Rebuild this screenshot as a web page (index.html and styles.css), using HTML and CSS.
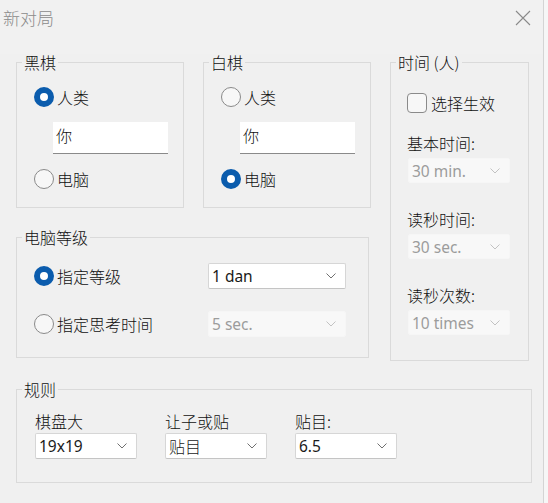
FILE: index.html
```html
<!DOCTYPE html>
<html lang="zh-CN">
<head>
<meta charset="utf-8">
<title>新对局</title>
<link rel="stylesheet" href="styles.css">
</head>
<body>
<div class="window">
  <header class="titlebar">
    <span class="title">新对局</span>
    <svg class="close" width="16" height="16" viewBox="0 0 16 16" aria-label="关闭"><path d="M1 1L15 15M15 1L1 15" stroke="#8a8a8a" stroke-width="1.1" fill="none"/></svg>
  </header>
  <main class="content">
    <div class="top">
      <div class="leftcol">
        <div class="players">
          <fieldset class="group player">
            <legend>黑棋</legend>
            <label class="opt"><input type="radio" name="black" checked><span>人类</span></label>
            <input class="name" type="text" value="你">
            <label class="opt"><input type="radio" name="black"><span>电脑</span></label>
          </fieldset>
          <fieldset class="group player">
            <legend>白棋</legend>
            <label class="opt"><input type="radio" name="white"><span>人类</span></label>
            <input class="name" type="text" value="你">
            <label class="opt"><input type="radio" name="white" checked><span>电脑</span></label>
          </fieldset>
        </div>
        <fieldset class="group level">
          <legend>电脑等级</legend>
          <div class="lrow">
            <label class="opt lopt"><input type="radio" name="lv" checked><span>指定等级</span></label>
            <div class="combo lcombo"><span>1 dan</span><svg class="chev" width="10" height="6" viewBox="0 0 10 6"><path d="M0.5 0.5L5 5L9.5 0.5" fill="none" stroke="currentColor" stroke-width="1"/></svg></div>
          </div>
          <div class="lrow second">
            <label class="opt lopt"><input type="radio" name="lv"><span>指定思考时间</span></label>
            <div class="combo lcombo disabled"><span>5 sec.</span><svg class="chev" width="10" height="6" viewBox="0 0 10 6"><path d="M0.5 0.5L5 5L9.5 0.5" fill="none" stroke="currentColor" stroke-width="1"/></svg></div>
          </div>
        </fieldset>
      </div>
      <fieldset class="group time">
        <legend>时间 (人)</legend>
        <label class="opt"><input type="checkbox"><span>选择生效</span></label>
        <div class="tlabel first">基本时间:</div>
        <div class="combo tcombo disabled"><span>30 min.</span><svg class="chev" width="10" height="6" viewBox="0 0 10 6"><path d="M0.5 0.5L5 5L9.5 0.5" fill="none" stroke="currentColor" stroke-width="1"/></svg></div>
        <div class="tlabel">读秒时间:</div>
        <div class="combo tcombo disabled"><span>30 sec.</span><svg class="chev" width="10" height="6" viewBox="0 0 10 6"><path d="M0.5 0.5L5 5L9.5 0.5" fill="none" stroke="currentColor" stroke-width="1"/></svg></div>
        <div class="tlabel">读秒次数:</div>
        <div class="combo tcombo disabled"><span>10 times</span><svg class="chev" width="10" height="6" viewBox="0 0 10 6"><path d="M0.5 0.5L5 5L9.5 0.5" fill="none" stroke="currentColor" stroke-width="1"/></svg></div>
      </fieldset>
    </div>
    <fieldset class="group rules">
      <legend>规则</legend>
      <div class="rcols">
        <div class="rcol">
          <div class="rlabel">棋盘大</div>
          <div class="combo rcombo"><span>19x19</span><svg class="chev" width="10" height="6" viewBox="0 0 10 6"><path d="M0.5 0.5L5 5L9.5 0.5" fill="none" stroke="currentColor" stroke-width="1"/></svg></div>
        </div>
        <div class="rcol">
          <div class="rlabel">让子或贴</div>
          <div class="combo rcombo"><span class="cjk">贴目</span><svg class="chev" width="10" height="6" viewBox="0 0 10 6"><path d="M0.5 0.5L5 5L9.5 0.5" fill="none" stroke="currentColor" stroke-width="1"/></svg></div>
        </div>
        <div class="rcol">
          <div class="rlabel">贴目:</div>
          <div class="combo rcombo"><span>6.5</span><svg class="chev" width="10" height="6" viewBox="0 0 10 6"><path d="M0.5 0.5L5 5L9.5 0.5" fill="none" stroke="currentColor" stroke-width="1"/></svg></div>
        </div>
      </div>
    </fieldset>
  </main>
</div>
</body>
</html>
```

FILE: styles.css
```css
html {
  background: #f6f6f6;
}
body {
  margin: 0;
  width: 548px;
  height: 503px;
  overflow: hidden;
  font-family: "Noto Sans CJK SC", "Noto Sans", sans-serif;
  font-size: 16px;
  font-weight: 300;
  color: #111;
}
.window {
  box-sizing: border-box;
  width: 544px;
  height: 503px;
  background: #f0f0f0;
  border-right: 1px solid #d4d4d4;
}
.titlebar {
  box-sizing: border-box;
  height: 54px;
  display: flex;
  justify-content: space-between;
  align-items: flex-start;
  padding: 9px 12px 0 3px;
  background: #f1f1f1;
}
.title {
  font-size: 17px;
  line-height: 17px;
  color: #8b8b8b;
}
.close {
  display: block;
  margin-top: 1px;
}
.content {
  padding-left: 16px;
}
.top {
  display: flex;
  align-items: flex-start;
}
.leftcol {
  display: flex;
  flex-direction: column;
  width: 355px;
}
.players {
  display: flex;
  gap: 19px;
}
.group {
  --pl: 17px;
  box-sizing: border-box;
  margin: 0;
  border: 1px solid #dadada;
  min-width: 0;
  padding-left: var(--pl);
}
.group legend {
  padding: 0 2px;
  margin-left: calc(5px - var(--pl));
  font-size: 16px;
  line-height: 16px;
  color: #111;
}
.player {
  width: 168px;
  padding-top: 17px;
  padding-bottom: 18px;
  padding-right: 0;
  display: flex;
  flex-direction: column;
  align-items: flex-start;
}
.opt {
  display: flex;
  align-items: center;
  height: 20px;
  line-height: 20px;
  white-space: nowrap;
}
.opt span {
  margin-left: 3px;
}
.opt input[type="radio"] {
  appearance: none;
  -webkit-appearance: none;
  box-sizing: border-box;
  width: 20px;
  height: 20px;
  margin: 0;
  border-radius: 50%;
  border: 1px solid #8a8a8a;
  background: #f7f7f7;
  flex: none;
}
.opt input[type="radio"]:checked {
  border: 6px solid #0b5cad;
  background: #ffffff;
}
.opt input[type="checkbox"] {
  appearance: none;
  -webkit-appearance: none;
  box-sizing: border-box;
  width: 20px;
  height: 20px;
  margin: 0;
  border-radius: 4px;
  border: 1px solid #8a8a8a;
  background: #f7f7f7;
  flex: none;
}
.opt input[type="checkbox"] + span {
  margin-left: 4px;
}
.name {
  box-sizing: border-box;
  width: 115px;
  height: 32px;
  margin: 15px 0 15px 19px;
  padding: 0 3px 5px 3px;
  border: 0;
  border-bottom: 1px solid #8a8a8a;
  background: #ffffff;
  font-family: "Noto Sans CJK SC", sans-serif;
  font-size: 16px;
  font-weight: 300;
  color: #111;
  outline: none;
}
.level {
  width: 353px;
  margin-top: 21px;
  padding-top: 18px;
  padding-bottom: 20px;
  padding-right: 0;
}
.lrow {
  display: flex;
  align-items: center;
  height: 26px;
}
.lrow.second {
  margin-top: 22px;
}
.lopt {
  width: 174px;
}
.combo {
  box-sizing: border-box;
  display: flex;
  justify-content: space-between;
  align-items: center;
  height: 26px;
  padding: 0 9px 0 3px;
  background: #ffffff;
  border: 1px solid #d6d6d6;
  border-bottom-color: #c4c4c4;
  border-radius: 2px;
  font-family: "Noto Sans", "Noto Sans CJK SC", sans-serif;
  font-size: 15.5px;
  font-weight: 400;
  color: #1a1a1a;
}
.combo .chev {
  display: block;
  color: #707070;
  flex: none;
}
.combo .cjk {
  font-family: "Noto Sans CJK SC", sans-serif;
  font-size: 16px;
  font-weight: 300;
}
.combo.disabled {
  background: #f8f8f8;
  border-color: #f6f6f6;
  color: #9c9c9c;
}
.combo.disabled .chev {
  color: #c2c2c2;
}
.lcombo {
  width: 138px;
}
.time {
  --pl: 16px;
  width: 139px;
  margin-left: 19px;
  padding-top: 23px;
  padding-bottom: 25px;
  padding-right: 0;
}
.tlabel {
  line-height: 18px;
  margin-top: 27px;
  white-space: nowrap;
}
.tlabel.first {
  margin-top: 21px;
}
.tcombo {
  width: 102px;
  height: 25px;
  margin: 6px 0 0 1px;
}
.rules {
  --pl: 18px;
  width: 516px;
  margin-top: 20px;
  padding-top: 15px;
  padding-bottom: 23px;
  padding-right: 0;
}
.rcols {
  display: flex;
  gap: 28px;
}
.rcol {
  width: 102px;
}
.rlabel {
  line-height: 18px;
  white-space: nowrap;
}
.rcombo {
  width: 102px;
  margin-top: 3px;
}
```
